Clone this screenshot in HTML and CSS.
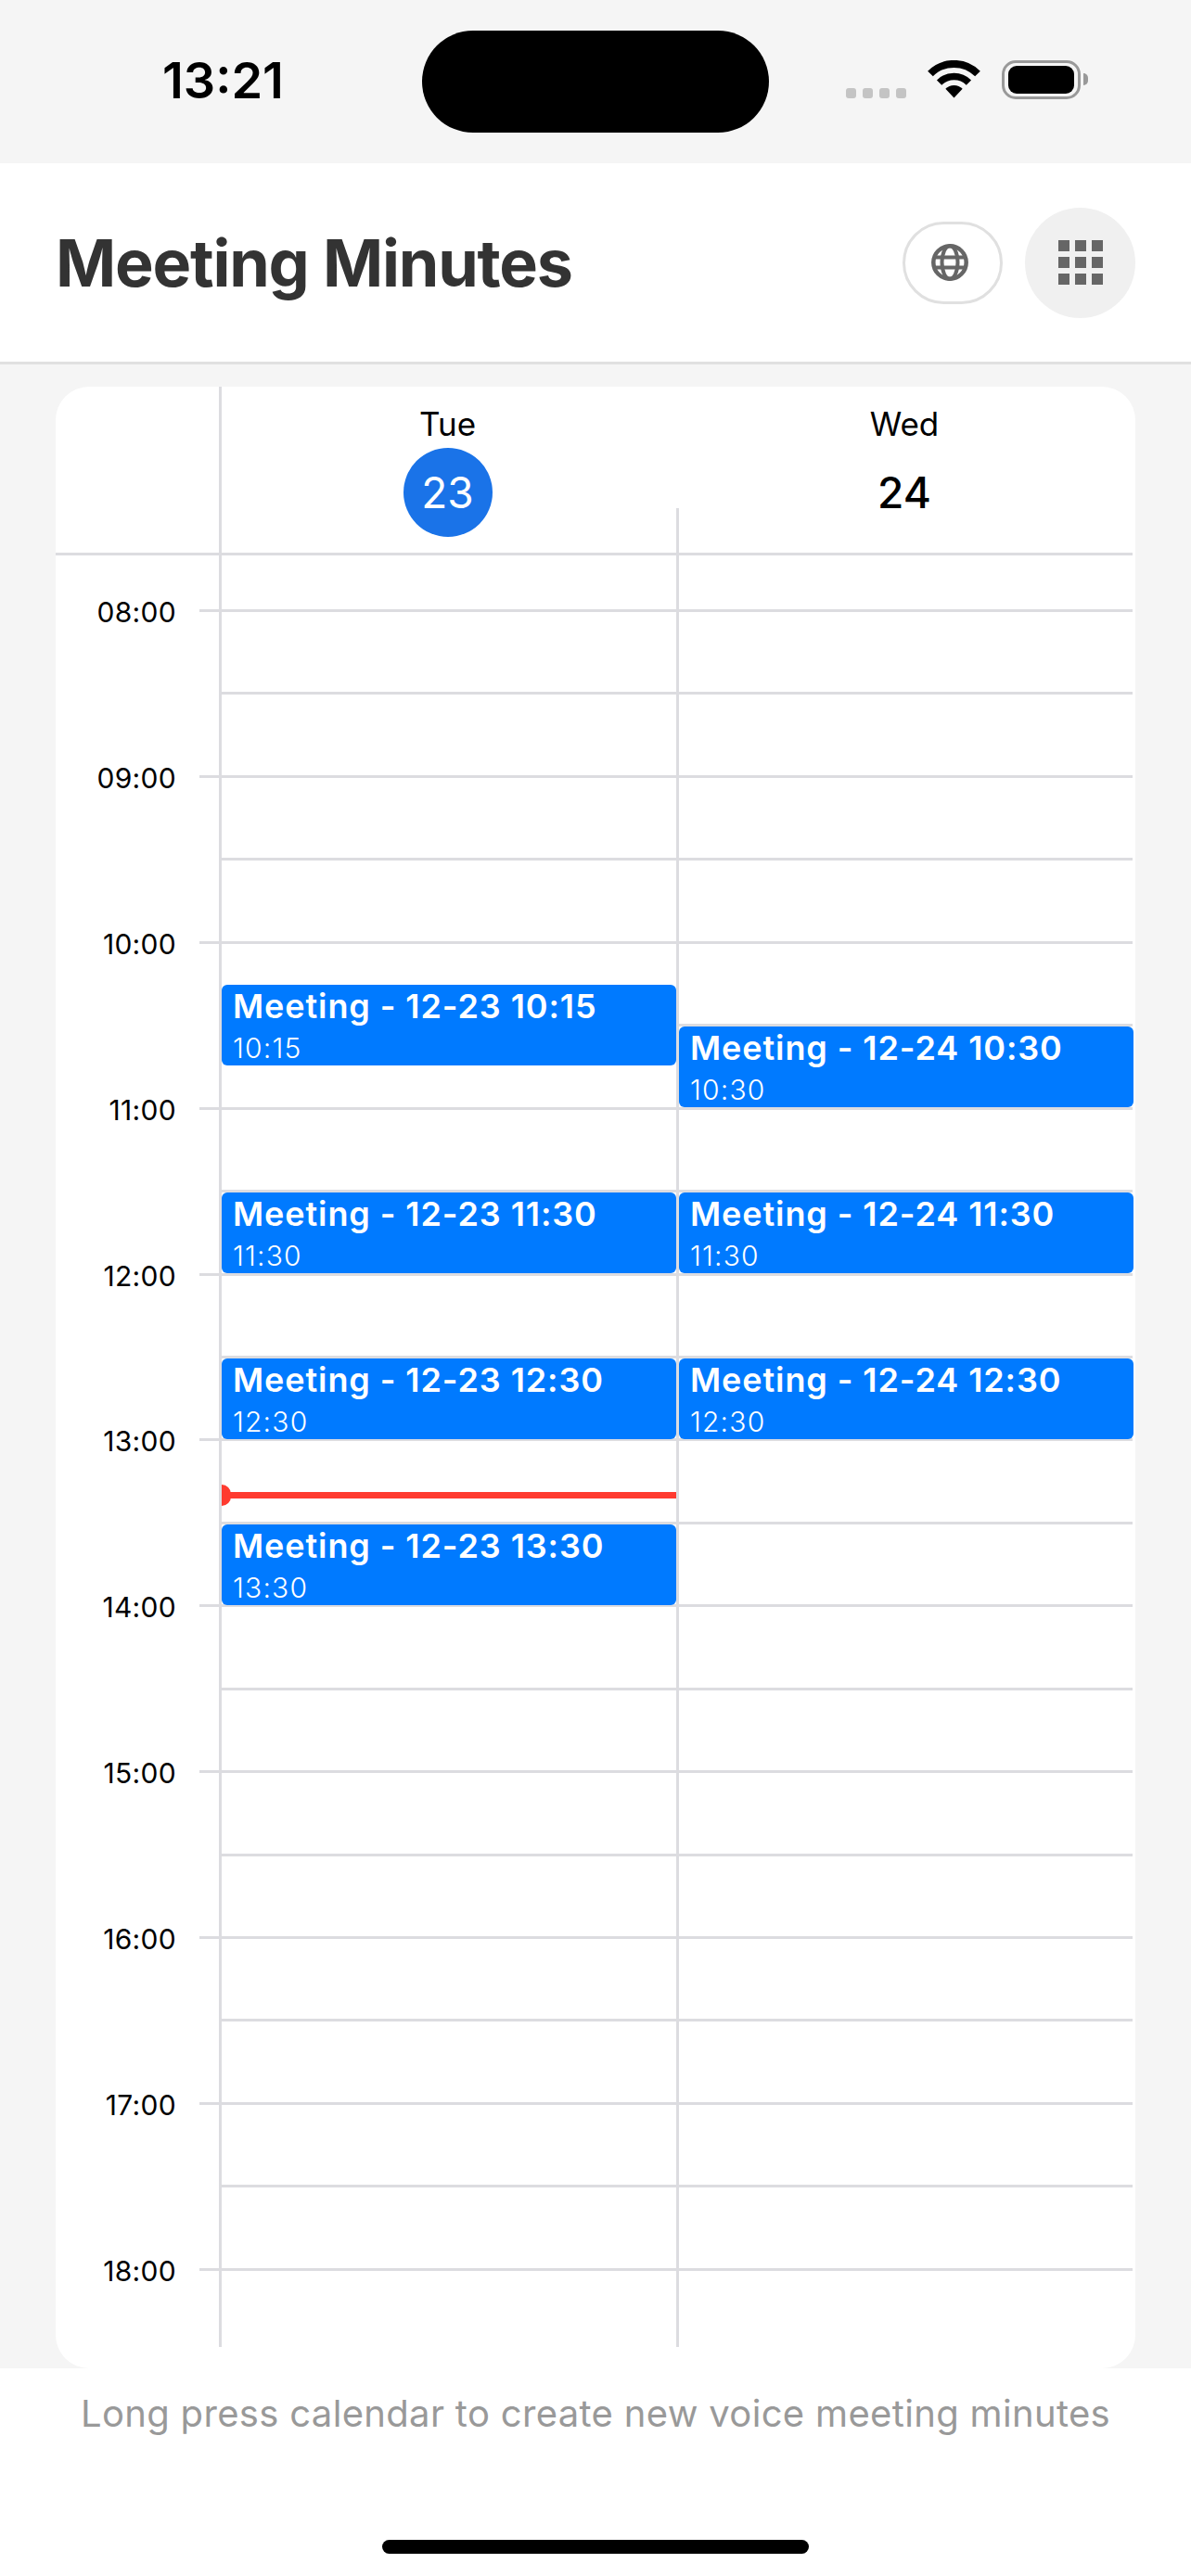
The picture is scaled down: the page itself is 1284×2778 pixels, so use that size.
FILE: index.html
```html
<!DOCTYPE html>
<html lang="en">
<head>
  <meta charset="UTF-8" />
  <meta name="viewport" content="width=device-width, initial-scale=1.0" />
  <title>Meeting Minutes</title>
  <link rel="stylesheet" href="styles.css">
</head>
<body>
  <div class="status-bar">
    <div class="clock">13:21</div>
    <div class="island"></div>
    <div class="status-icons">
      <div class="signal"><span></span><span></span><span></span><span></span></div>
      <svg class="wifi" viewBox="0 0 57 41" width="57" height="41">
        <path d="M3 14.5A36 36 0 0 1 54 14.5" fill="none" stroke="#000" stroke-width="8" />
        <path d="M12.6 24.1A22.5 22.5 0 0 1 44.4 24.1" fill="none" stroke="#000" stroke-width="7.5" />
        <path d="M28.5 40.5L19.3 30.8A13 13 0 0 1 37.7 30.8Z" fill="#000" />
      </svg>
      <div class="battery"><div class="battery-fill"></div></div>
      <div class="battery-nub"></div>
    </div>
  </div>

  <header class="app-header">
    <h1 class="app-title">Meeting Minutes</h1>
    <div class="header-actions">
      <button class="lang-btn">
        <svg viewBox="0 0 40 40" width="40" height="40" fill="none" stroke="#666" stroke-width="4.5">
          <circle cx="20" cy="20" r="17.700" />
          <ellipse cx="20" cy="20" rx="8.500" ry="17.700" stroke-width="4" />
          <path d="M3.500 14.500H36.500M3.500 25.500H36.500" stroke-width="4" />
        </svg>
      </button>
      <button class="grid-btn">
        <span></span><span></span><span></span>
        <span></span><span></span><span></span>
        <span></span><span></span><span></span>
      </button>
    </div>
  </header>

  <main class="content">
    <section class="calendar">
      <div class="week-head">
        <div class="gutter"></div>
        <div class="day-head">
          <div class="day-name">Tue</div>
          <div class="day-num today">23</div>
        </div>
        <div class="day-head next">
          <div class="day-name">Wed</div>
          <div class="day-num">24</div>
        </div>
      </div>

      <div class="timeline">
        <div class="row hour"><div class="time">08:00</div><div class="rule"></div></div>
        <div class="row half"><div class="rule"></div></div>
        <div class="row hour"><div class="time">09:00</div><div class="rule"></div></div>
        <div class="row half"><div class="rule"></div></div>
        <div class="row hour"><div class="time">10:00</div><div class="rule"></div></div>
        <div class="row half"><div class="rule"></div></div>
        <div class="row hour"><div class="time">11:00</div><div class="rule"></div></div>
        <div class="row half"><div class="rule"></div></div>
        <div class="row hour"><div class="time">12:00</div><div class="rule"></div></div>
        <div class="row half"><div class="rule"></div></div>
        <div class="row hour"><div class="time">13:00</div><div class="rule"></div></div>
        <div class="row half"><div class="rule"></div></div>
        <div class="row hour"><div class="time">14:00</div><div class="rule"></div></div>
        <div class="row half"><div class="rule"></div></div>
        <div class="row hour"><div class="time">15:00</div><div class="rule"></div></div>
        <div class="row half"><div class="rule"></div></div>
        <div class="row hour"><div class="time">16:00</div><div class="rule"></div></div>
        <div class="row half"><div class="rule"></div></div>
        <div class="row hour"><div class="time">17:00</div><div class="rule"></div></div>
        <div class="row half"><div class="rule"></div></div>
        <div class="row hour last"><div class="time">18:00</div><div class="rule"></div></div>

        <div class="days">
          <div class="day">
            <div class="event" style="top: 463px"><div class="event-title">Meeting - 12-23 10:15</div><div class="event-time">10:15</div></div>
            <div class="event" style="top: 687px"><div class="event-title">Meeting - 12-23 11:30</div><div class="event-time">11:30</div></div>
            <div class="event" style="top: 866px"><div class="event-title">Meeting - 12-23 12:30</div><div class="event-time">12:30</div></div>
            <div class="now" style="top: 1010px"><div class="now-dot"></div></div>
            <div class="event" style="top: 1045px"><div class="event-title">Meeting - 12-23 13:30</div><div class="event-time">13:30</div></div>
          </div>
          <div class="day">
            <div class="event" style="top: 508px"><div class="event-title">Meeting - 12-24 10:30</div><div class="event-time">10:30</div></div>
            <div class="event" style="top: 687px"><div class="event-title">Meeting - 12-24 11:30</div><div class="event-time">11:30</div></div>
            <div class="event" style="top: 866px"><div class="event-title">Meeting - 12-24 12:30</div><div class="event-time">12:30</div></div>
          </div>
        </div>
      </div>
    </section>
  </main>

  <footer class="app-footer">
    <div class="hint">Long press calendar to create new voice meeting minutes</div>
    <div class="home-bar"></div>
  </footer>
</body>
</html>
```

FILE: styles.css
```css
* {
  box-sizing: border-box;
}

body {
  margin: 0;
  height: 2778px;
  overflow: hidden;
  font-family: Inter, "Liberation Sans", sans-serif;
  background: #fff;
  color: #000;
  display: flex;
  flex-direction: column;
}

/* status bar */
.status-bar {
  height: 176px;
  background: #f5f5f5;
  display: grid;
  grid-template-columns: 455px 374px 1fr;
  align-items: center;
}

.clock {
  padding-left: 175px;
  font-size: 54px;
  font-weight: 600;
  line-height: 60px;
  margin-top: -2px;
}

.island {
  height: 110px;
  background: #000;
  border-radius: 55px;
}

.status-icons {
  display: flex;
  align-items: flex-end;
  gap: 23px;
  height: 42px;
  margin-top: -4px;
  padding-left: 83px;
}

.signal {
  display: flex;
  gap: 7px;
  margin-bottom: 1px;
}

.signal span {
  width: 11px;
  height: 11px;
  background: #c4c4c4;
  border-radius: 3px;
}

.wifi {
  display: block;
  margin-bottom: 1px;
}

.battery {
  width: 85px;
  height: 42px;
  border: 3px solid #999;
  border-radius: 15px;
  padding: 3px 4px;
}

.battery-fill {
  height: 100%;
  background: #000;
  border-radius: 9px;
}

.battery-nub {
  width: 5px;
  height: 13px;
  margin: 0 0 15px -20px;
  background: #999;
  border-radius: 0 6px 6px 0;
}

/* header */
.app-header {
  height: 217px;
  background: #fff;
  border-bottom: 3px solid #e0e0e0;
  padding: 0 60px;
  display: flex;
  align-items: center;
  justify-content: space-between;
}

.app-title {
  margin: 0;
  font-size: 70px;
  font-weight: 700;
  letter-spacing: -1.200px;
  color: #333;
}

.header-actions {
  display: flex;
  align-items: center;
  gap: 24px;
}

.lang-btn {
  width: 108px;
  height: 89px;
  padding: 0 6px 0 0;
  background: #fff;
  border: 3px solid #e0e0e0;
  border-radius: 45px;
  display: flex;
  align-items: center;
  justify-content: center;
}

.grid-btn {
  width: 119px;
  height: 119px;
  padding: 0;
  border: none;
  border-radius: 50%;
  background: #f0f0f0;
  display: grid;
  grid-template-columns: repeat(3, 12px);
  grid-auto-rows: 12px;
  gap: 6px;
  justify-content: center;
  align-content: center;
}

.grid-btn span {
  background: #666;
}

/* calendar */
.content {
  height: 2161px;
  background: #f5f5f5;
  padding: 24px 60px 0;
}

.calendar {
  height: 100%;
  background: #fff;
  border-radius: 36px;
  padding-right: 3px;
}

.week-head {
  display: flex;
  height: 182px;
  border-bottom: 3px solid #dcdce0;
}

.gutter {
  width: 176px;
}

.day-head {
  width: 493px;
  position: relative;
  padding-top: 22px;
  display: flex;
  flex-direction: column;
  align-items: center;
}

.day-head::before {
  content: "";
  position: absolute;
  left: 0;
  top: 0;
  bottom: -3px;
  width: 3px;
  background: #dcdce0;
}

.day-head.next {
  width: 492px;
}

.day-head.next::before {
  top: 131px;
}

.day-name {
  font-size: 35px;
  line-height: 36px;
}

.day-num {
  width: 96px;
  height: 96px;
  margin-top: 8px;
  border-radius: 50%;
  font-size: 46px;
  font-weight: 500;
  line-height: 96px;
  text-align: center;
}

.day-num.today {
  background: #1a73e8;
  color: #fff;
  font-weight: 400;
}

.timeline {
  position: relative;
  height: 1932px;
  padding-top: 58px;
}

.row {
  display: flex;
  height: 89.45px;
}

.row.last {
  height: 85px;
}

.row.half {
  padding-left: 178px;
}

.time {
  width: 155px;
  padding-right: 25px;
  text-align: right;
  font-size: 30px;
  letter-spacing: 0.300px;
  line-height: 6px;
}

.rule {
  flex: 1;
  border-top: 3px solid #dcdce0;
}

.days {
  position: absolute;
  left: 176px;
  right: 0;
  top: 0;
  bottom: 0;
  display: flex;
}

.day {
  position: relative;
  width: 493px;
  border-left: 3px solid #dcdce0;
}

.day + .day {
  width: 492px;
}

.event {
  position: absolute;
  left: 0;
  width: 490px;
  height: 87px;
  padding: 0 12px;
  overflow: hidden;
  background: #007aff;
  border-radius: 6px;
  color: #fff;
}

.event-title {
  font-size: 36px;
  font-weight: 600;
  letter-spacing: 0.900px;
  line-height: 46px;
  white-space: nowrap;
}

.event-time {
  margin-top: 2px;
  font-size: 30px;
  font-weight: 300;
  letter-spacing: 1.200px;
  line-height: 40px;
}

.now {
  position: absolute;
  left: 0;
  width: 490px;
  height: 7px;
  background: #ff3b30;
}

.now-dot {
  position: absolute;
  left: 0;
  top: -8px;
  width: 10px;
  height: 23px;
  background: #ff3b30;
  border-radius: 0 12px 12px 0;
}

/* footer */
.app-footer {
  flex: 1;
  background: #fff;
  display: flex;
  flex-direction: column;
  align-items: center;
}

.hint {
  margin-top: 17px;
  font-size: 40px;
  letter-spacing: 0.330px;
  line-height: 64px;
  color: #999;
}

.home-bar {
  width: 460px;
  height: 15px;
  margin-top: 104px;
  background: #000;
  border-radius: 8px;
}
```
